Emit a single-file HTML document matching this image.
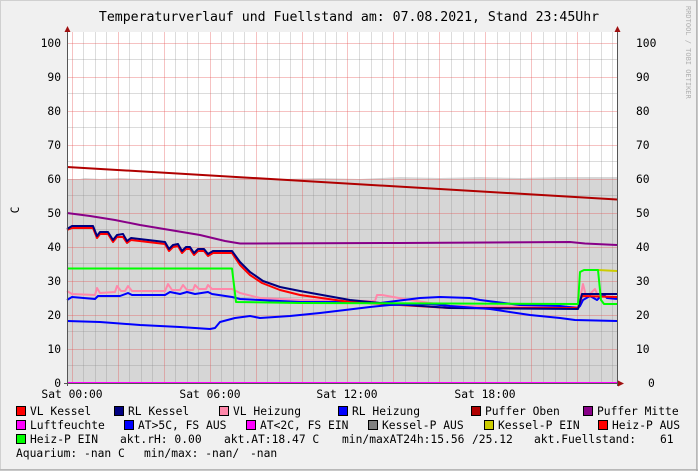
<!DOCTYPE html>
<html><head><meta charset="utf-8"><style>
html,body{margin:0;padding:0;background:#f0f0f0;}
svg{display:block;}
text{font-family:"DejaVu Sans Mono","Liberation Mono",monospace;fill:#000;}
</style></head><body>
<svg width="698" height="471" viewBox="0 0 698 471" xmlns="http://www.w3.org/2000/svg">
<rect x="0" y="0" width="698" height="471" fill="#f0f0f0"/>
<rect x="0.5" y="0.5" width="696" height="469" fill="none" stroke="#d0d0d0"/>
<line x1="697" y1="0" x2="697" y2="471" stroke="#a0a0a0"/>
<line x1="0" y1="470" x2="698" y2="470" stroke="#a0a0a0"/>
<rect x="67" y="32" width="550" height="351" fill="#fff"/>
<path d="M67,383 L67,179 L80,179 L85,178 L100,179 L120,178 L140,179 L160,178 L200,179 L240,178 L280,179 L320,178 L360,179 L400,177 L440,178 L480,177 L520,178 L560,177 L600,177 L617,177 L617,383 Z" fill="#d6d6d6"/>
<g stroke="rgba(140,140,140,0.3)" stroke-width="1">
<line x1="67" x2="617" y1="365.5" y2="365.5"/><line x1="67" x2="617" y1="331.5" y2="331.5"/><line x1="67" x2="617" y1="297.5" y2="297.5"/><line x1="67" x2="617" y1="263.5" y2="263.5"/><line x1="67" x2="617" y1="229.5" y2="229.5"/><line x1="67" x2="617" y1="195.5" y2="195.5"/><line x1="67" x2="617" y1="161.5" y2="161.5"/><line x1="67" x2="617" y1="127.5" y2="127.5"/><line x1="67" x2="617" y1="93.5" y2="93.5"/><line x1="67" x2="617" y1="59.5" y2="59.5"/>
</g>
<g stroke="rgba(140,140,140,0.3)" stroke-width="1">
<line y1="32" y2="383" x1="83.5" x2="83.5"/><line y1="32" y2="383" x1="95.5" x2="95.5"/><line y1="32" y2="383" x1="106.5" x2="106.5"/><line y1="32" y2="383" x1="129.5" x2="129.5"/><line y1="32" y2="383" x1="141.5" x2="141.5"/><line y1="32" y2="383" x1="152.5" x2="152.5"/><line y1="32" y2="383" x1="175.5" x2="175.5"/><line y1="32" y2="383" x1="187.5" x2="187.5"/><line y1="32" y2="383" x1="198.5" x2="198.5"/><line y1="32" y2="383" x1="221.5" x2="221.5"/><line y1="32" y2="383" x1="233.5" x2="233.5"/><line y1="32" y2="383" x1="244.5" x2="244.5"/><line y1="32" y2="383" x1="267.5" x2="267.5"/><line y1="32" y2="383" x1="279.5" x2="279.5"/><line y1="32" y2="383" x1="290.5" x2="290.5"/><line y1="32" y2="383" x1="313.5" x2="313.5"/><line y1="32" y2="383" x1="325.5" x2="325.5"/><line y1="32" y2="383" x1="336.5" x2="336.5"/><line y1="32" y2="383" x1="359.5" x2="359.5"/><line y1="32" y2="383" x1="371.5" x2="371.5"/><line y1="32" y2="383" x1="382.5" x2="382.5"/><line y1="32" y2="383" x1="405.5" x2="405.5"/><line y1="32" y2="383" x1="417.5" x2="417.5"/><line y1="32" y2="383" x1="428.5" x2="428.5"/><line y1="32" y2="383" x1="451.5" x2="451.5"/><line y1="32" y2="383" x1="463.5" x2="463.5"/><line y1="32" y2="383" x1="474.5" x2="474.5"/><line y1="32" y2="383" x1="497.5" x2="497.5"/><line y1="32" y2="383" x1="509.5" x2="509.5"/><line y1="32" y2="383" x1="520.5" x2="520.5"/><line y1="32" y2="383" x1="543.5" x2="543.5"/><line y1="32" y2="383" x1="555.5" x2="555.5"/><line y1="32" y2="383" x1="566.5" x2="566.5"/><line y1="32" y2="383" x1="589.5" x2="589.5"/><line y1="32" y2="383" x1="601.5" x2="601.5"/><line y1="32" y2="383" x1="612.5" x2="612.5"/>
</g>
<g stroke="rgba(230,80,80,0.35)" stroke-width="1">
<line x1="67" x2="617" y1="349.5" y2="349.5"/><line x1="67" x2="617" y1="315.5" y2="315.5"/><line x1="67" x2="617" y1="281.5" y2="281.5"/><line x1="67" x2="617" y1="247.5" y2="247.5"/><line x1="67" x2="617" y1="213.5" y2="213.5"/><line x1="67" x2="617" y1="179.5" y2="179.5"/><line x1="67" x2="617" y1="145.5" y2="145.5"/><line x1="67" x2="617" y1="111.5" y2="111.5"/><line x1="67" x2="617" y1="77.5" y2="77.5"/><line x1="67" x2="617" y1="43.5" y2="43.5"/>
<line y1="32" y2="383" x1="72.5" x2="72.5"/><line y1="32" y2="383" x1="118.5" x2="118.5"/><line y1="32" y2="383" x1="164.5" x2="164.5"/><line y1="32" y2="383" x1="210.5" x2="210.5"/><line y1="32" y2="383" x1="256.5" x2="256.5"/><line y1="32" y2="383" x1="302.5" x2="302.5"/><line y1="32" y2="383" x1="347.5" x2="347.5"/><line y1="32" y2="383" x1="393.5" x2="393.5"/><line y1="32" y2="383" x1="439.5" x2="439.5"/><line y1="32" y2="383" x1="485.5" x2="485.5"/><line y1="32" y2="383" x1="531.5" x2="531.5"/><line y1="32" y2="383" x1="577.5" x2="577.5"/>
</g>
<g fill="none" stroke-width="2" stroke-linejoin="round">
<polyline stroke="#b00000" points="67,167 617,199.5"/>
<polyline stroke="#880088" points="67,213 90,216 115,220 140,225 170,230 200,235 225,241 240,243.5 400,243 570,242 585,243.5 617,245"/>
<polyline stroke="#ff88aa" points="67,291 72,294 95,295 97,288 100,293 115,292 117,286 121,291 125,291 128,286 132,291 165,291 168,284 172,290 180,290 183,285 187,290 193,290 195,285 199,289 206,289 208,285 212,289 232,289 240,293 260,298 300,300 375,301 377,295 382,295 410,300 450,306 578,307 581,294 583,284 586,296 590,294 595,289 598,296 603,296 617,298"/>
<polyline stroke="#0000ff" points="67,300 72,297 95,299 98,296 120,296 128,293 132,295 165,295 170,292 180,294 187,292 195,294 208,292 212,294 232,297 240,299 260,300 300,302 360,302 380,303 420,298 440,297 470,298 480,300 520,305 560,306 578,308 580,306 583,300 590,296 597,300 603,294 607,298 617,299"/>
<polyline stroke="#ff0000" points="67,230 72,228 93,228 97,238 100,234 108,234 113,242 117,237 123,237 127,243 131,240 165,244 169,251 173,247 178,246 182,253 186,249 190,249 194,255 198,251 204,251 208,256 213,253 232,253 240,265 250,275 262,283 280,290 300,295 350,302 450,308 578,308 582,296 617,297"/>
<polyline stroke="#000080" points="67,229 72,226 93,226 97,236 100,232 108,232 113,240 117,235 123,234 127,241 131,238 165,242 169,249 173,245 178,244 182,251 186,247 190,247 194,253 198,249 204,249 208,254 213,251 232,251 240,262 250,272 263,281 280,287 300,291 350,300 380,303 450,308 578,309 582,294 617,294"/>
<polyline stroke="#0000ff" points="67,321 100,322 140,325 180,327 210,329 215,328 220,322 235,318 250,316 260,318 290,316 320,313 345,310 370,307 390,305 430,304 450,306 490,309 530,315 560,318 575,320 617,321"/>
<polyline stroke="#cccc00" points="598,270 617,271"/>
<polyline stroke="#00ff00" points="67,268.5 232,268.5 236,302 300,303 578,304 580,272 584,270 598,270 601,300 604,304 617,304"/>
<polyline stroke="#ff00ff" points="67,383 617,383"/>
</g>
<line x1="67.5" y1="28" x2="67.5" y2="386" stroke="#555" stroke-width="1"/>
<line x1="617.5" y1="28" x2="617.5" y2="386" stroke="#555" stroke-width="1"/>
<line x1="64" y1="383.5" x2="621" y2="383.5" stroke="#555" stroke-width="1"/>
<polygon points="64.5,32 70.5,32 67.5,26" fill="#a01010"/>
<polygon points="614.5,32 620.5,32 617.5,26" fill="#a01010"/>
<polygon points="618,380.5 618,386.5 624,383.5" fill="#a01010"/>
<text x="349" y="21" font-size="13.2" text-anchor="middle">Temperaturverlauf und Fuellstand am: 07.08.2021, Stand 23:45Uhr</text>
<g font-size="11.3">
<g text-anchor="end">
<text x="61" y="47">100</text><text x="61" y="81">90</text><text x="61" y="115">80</text><text x="61" y="149">70</text><text x="61" y="183">60</text><text x="61" y="217">50</text><text x="61" y="251">40</text><text x="61" y="285">30</text><text x="61" y="319">20</text><text x="61" y="353">10</text><text x="61" y="387">0</text>
</g>
<text x="636" y="47">100</text><text x="636" y="81">90</text><text x="636" y="115">80</text><text x="636" y="149">70</text><text x="636" y="183">60</text><text x="636" y="217">50</text><text x="636" y="251">40</text><text x="636" y="285">30</text><text x="636" y="319">20</text><text x="636" y="353">10</text><text x="648" y="387">0</text>
<text x="72" y="398" text-anchor="middle">Sat 00:00</text>
<text x="210" y="398" text-anchor="middle">Sat 06:00</text>
<text x="347" y="398" text-anchor="middle">Sat 12:00</text>
<text x="485" y="398" text-anchor="middle">Sat 18:00</text>
<text x="0" y="0" transform="translate(19,210) rotate(-90)" text-anchor="middle">C</text>
</g>
<text x="0" y="0" font-size="7" style="fill:#b0b0b0" transform="translate(686,6) rotate(90)">RRDTOOL / TOBI OETIKER</text>
<g stroke="#000" stroke-width="1">
<rect x="16.5" y="406.5" width="9" height="9" fill="#ff0000"/>
<rect x="114.5" y="406.5" width="9" height="9" fill="#000080"/>
<rect x="219.5" y="406.5" width="9" height="9" fill="#ff88aa"/>
<rect x="338.5" y="406.5" width="9" height="9" fill="#0000ff"/>
<rect x="471.5" y="406.5" width="9" height="9" fill="#b00000"/>
<rect x="583.5" y="406.5" width="9" height="9" fill="#880088"/>
<rect x="16.5" y="420.5" width="9" height="9" fill="#ff00ff"/>
<rect x="124.5" y="420.5" width="9" height="9" fill="#0000ff"/>
<rect x="246.5" y="420.5" width="9" height="9" fill="#ff00ff"/>
<rect x="368.5" y="420.5" width="9" height="9" fill="#808080"/>
<rect x="484.5" y="420.5" width="9" height="9" fill="#cccc00"/>
<rect x="598.5" y="420.5" width="9" height="9" fill="#ff0000"/>
<rect x="16.5" y="434.5" width="9" height="9" fill="#00ff00"/>
</g>
<g font-size="11.3">
<text x="30" y="415">VL Kessel</text>
<text x="128" y="415">RL Kessel</text>
<text x="233" y="415">VL Heizung</text>
<text x="352" y="415">RL Heizung</text>
<text x="485" y="415">Puffer Oben</text>
<text x="597" y="415">Puffer Mitte</text>
<text x="30" y="429">Luftfeuchte</text>
<text x="138" y="429">AT&gt;5C, FS AUS</text>
<text x="260" y="429">AT&lt;2C, FS EIN</text>
<text x="382" y="429">Kessel-P AUS</text>
<text x="498" y="429">Kessel-P EIN</text>
<text x="612" y="429">Heiz-P AUS</text>
<text x="30" y="443">Heiz-P EIN</text>
<text x="120" y="443">akt.rH: 0.00</text>
<text x="224" y="443">akt.AT:18.47 C</text>
<text x="342" y="443">min/maxAT24h:15.56</text>
<text x="472" y="443">/25.12</text>
<text x="534" y="443">akt.Fuellstand:</text>
<text x="660" y="443">61</text>
<text x="16" y="457">Aquarium: -nan C</text>
<text x="144" y="457">min/max: -nan/</text>
<text x="250" y="457">-nan</text>
</g>
</svg>
</body></html>
